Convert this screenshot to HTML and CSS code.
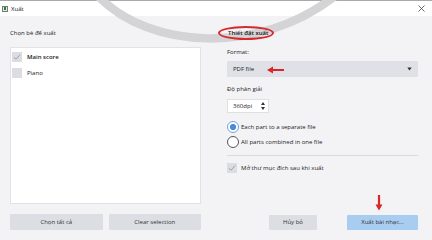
FILE: index.html
```html
<!DOCTYPE html>
<html>
<head>
<meta charset="utf-8">
<link rel="stylesheet" href="styles.css">
</head>
<body>
<div class="window">
	<div class="titlebar">
		<span class="app-icon"><span></span></span>
		<span class="title">Xuất</span>
		<svg class="close" width="7" height="7" viewBox="0 0 7 7"><path d="M0.5 0.5 L6.5 6.5 M6.5 0.5 L0.5 6.5" stroke="#444" stroke-width="0.8" fill="none"/></svg>
	</div>
	<!-- vệt cong mờ phía trên -->
	<svg class="arc" width="432" height="60" viewBox="0 0 432 60"><path d="M98 -4 C150 50, 260 55, 335 -4" stroke="#d4d4d6" stroke-width="8.5" fill="none"/></svg>
	<div class="content">
		<div class="col">
			<div class="label">Chọn bè để xuất</div>
			<div class="listbox">
				<div class="item">
					<span class="check"><svg width="10" height="10" viewBox="0 0 10 10"><path d="M2 5.2 L4 7.2 L8.2 2.6" stroke="#8d9096" stroke-width="0.8" fill="none"/></svg></span>
					<span class="item-name strong">Main score</span>
				</div>
				<div class="item">
					<span class="check"></span>
					<span class="item-name">Piano</span>
				</div>
			</div>
			<div class="btn-row">
				<div class="btn">Chọn tất cả</div>
				<div class="btn">Clear selection</div>
			</div>
		</div>
		<div class="col">
			<div class="label strong section-title">
				Thiết đặt xuất
				<span class="oval"></span>
			</div>
			<div class="label gap-format">Format:</div>
			<div class="select">
				<span>PDF file</span>
				<svg class="red-arrow-left" width="18" height="8" viewBox="0 0 18 8"><path d="M0 4 L6 0.5 L6 2.9 L17 2.9 L17 5.1 L6 5.1 L6 7.5 Z" fill="#d8262b"/></svg>
				<svg class="caret" width="5" height="4" viewBox="0 0 5 4"><path d="M0.3 0.5 L4.7 0.5 L2.5 3.5 Z" fill="#333"/></svg>
			</div>
			<div class="label gap-res">Độ phân giải</div>
			<div class="spin">
				<span>360dpi</span>
				<span class="spin-arrows">
					<svg width="4" height="3" viewBox="0 0 4 3"><path d="M0 3 L4 3 L2 0 Z" fill="#333"/></svg>
					<svg width="4" height="3" viewBox="0 0 4 3"><path d="M0 0 L4 0 L2 3 Z" fill="#333"/></svg>
				</span>
			</div>
			<div class="radio-row first">
				<span class="radio on"></span>
				<span>Each part to a separate file</span>
			</div>
			<div class="radio-row">
				<span class="radio"></span>
				<span>All parts combined in one file</span>
			</div>
			<div class="separator"></div>
			<div class="check-row">
				<span class="check"><svg width="10" height="10" viewBox="0 0 10 10"><path d="M2 5.2 L4 7.2 L8.2 2.6" stroke="#8d9096" stroke-width="0.8" fill="none"/></svg></span>
				<span>Mở thư mục đích sau khi xuất</span>
			</div>
			<div class="btn-row right">
				<div class="btn cancel">Hủy bỏ</div>
				<div class="btn primary">
					Xuất bài nhạc...
					<svg class="red-arrow-down" width="8" height="16" viewBox="0 0 8 16"><path d="M2.9 0 L5.1 0 L5.1 9.5 L7.5 9.5 L4 15.5 L0.5 9.5 L2.9 9.5 Z" fill="#d8262b"/></svg>
				</div>
			</div>
		</div>
	</div>
</div>
</body>
</html>
```

FILE: styles.css
```css
* {
	box-sizing: border-box;
}
body {
	margin: 0;
	font-family: "Open Sans", "Noto Sans", sans-serif;
	font-size: 6px;
	color: #222;
}
.window {
	position: relative;
	width: 432px;
	height: 240px;
	background: #f3f3f5;
	display: flex;
	flex-direction: column;
	overflow: hidden;
}
.titlebar {
	height: 16px;
	background: #fff;
	border-top: 1px solid #a9a9a9;
	display: flex;
	align-items: center;
	padding: 0 0 0 2px;
}
.app-icon {
	width: 6px;
	height: 6px;
	border: 1px solid #6f7d73;
	background: #dfe7e1;
	display: flex;
	align-items: center;
	justify-content: center;
}
.app-icon span {
	width: 2px;
	height: 3px;
	background: #2f7d4a;
}
.title {
	margin-left: 3px;
	line-height: 10px;
}
.close {
	margin-left: auto;
	margin-right: 7px;
}
.content {
	position: relative;
	z-index: 1;
	flex: 1;
	display: flex;
	gap: 26px;
	padding: 0 14px 10px 10px;
}
.col {
	width: 191px;
	display: flex;
	flex-direction: column;
}
.label {
	margin-top: 12px;
	line-height: 10px;
}
.strong {
	font-weight: 600;
	color: #1a1a1a;
}
.listbox {
	margin-top: 9px;
	flex: 1;
	background: #fff;
	border: 1px solid #e2e2e4;
	padding: 4px 0 0 1px;
}
.item {
	display: flex;
	align-items: center;
	height: 10px;
	margin-bottom: 6px;
}
.check {
	width: 10px;
	height: 10px;
	background: #dcdde2;
	flex: none;
	display: block;
}
.check svg {
	display: block;
}
.item-name {
	margin-left: 5px;
}
.btn-row {
	margin-top: 10px;
	display: grid;
	grid-template-columns: 1fr 1fr;
	gap: 6px;
}
.btn {
	height: 16px;
	line-height: 16px;
	text-align: center;
	background: #dcdee3;
	border-radius: 1px;
	color: #333;
}
.section-title {
	position: relative;
	padding-left: 1px;
}
.oval {
	position: absolute;
	left: -9px;
	top: -2px;
	width: 56px;
	height: 14px;
	border: 2px solid #d52a2e;
	border-radius: 50%;
}
.gap-format {
	margin-top: 9px;
}
.select {
	position: relative;
	margin-top: 4px;
	height: 16px;
	background: #dfe1e6;
	border-radius: 1px;
	display: flex;
	align-items: center;
	padding: 0 6px;
}
.red-arrow-left {
	position: absolute;
	left: 40px;
	top: 5px;
}
.caret {
	margin-left: auto;
	margin-right: 0;
}
.gap-res {
	margin-top: 7px;
}
.spin {
	margin-top: 5px;
	width: 42px;
	height: 14px;
	background: #fff;
	border: 1px solid #e0e0e2;
	display: flex;
	align-items: center;
	padding: 0 3px 0 5px;
}
.spin-arrows {
	margin-left: auto;
	display: flex;
	flex-direction: column;
	gap: 2px;
}
.spin-arrows svg {
	display: block;
}
.radio-row {
	display: flex;
	align-items: center;
	height: 12px;
	margin-top: 3px;
	gap: 2px;
}
.radio-row.first {
	margin-top: 8px;
}
.radio {
	width: 12px;
	height: 12px;
	border-radius: 50%;
	border: 1px solid #555;
	background: #fff;
	flex: none;
}
.radio.on {
	border-color: #6fa3dc;
	background: radial-gradient(circle, #4a8ad6 0 2.8px, #fff 3.3px);
}
.separator {
	margin-top: 7px;
	height: 1px;
	background: #dadadc;
}
.check-row {
	margin-top: 7px;
	display: flex;
	align-items: center;
	gap: 4px;
	height: 10px;
}
.btn-row.right {
	margin-top: auto;
	display: flex;
	justify-content: flex-end;
	gap: 30px;
	height: 15px;
}
.btn-row.right .btn {
	height: 15px;
	line-height: 15px;
}
.cancel {
	width: 48px;
}
.primary {
	position: relative;
	width: 71px;
	background: #a9cdf1;
}
.red-arrow-down {
	position: absolute;
	left: 28px;
	top: -20px;
}
.arc {
	position: absolute;
	left: 0;
	top: 0;
	pointer-events: none;
}
```
